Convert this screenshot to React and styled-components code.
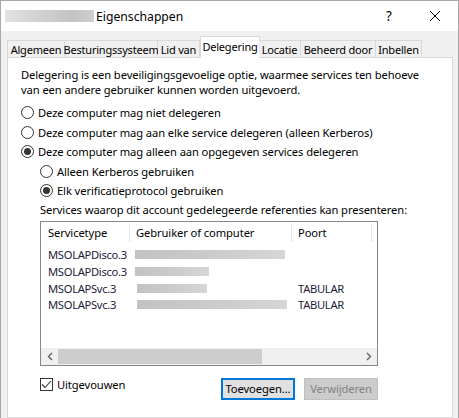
import React from "react";
import styled, { createGlobalStyle } from "styled-components";

const GlobalStyle = createGlobalStyle`
  html, body {
    margin: 0;
    padding: 0;
    background: #ffffff;
  }
  * {
    box-sizing: border-box;
  }
`;

const Window = styled.div`
  width: 459px;
  height: 418px;
  border: 1px solid #a8a8a8;
  border-bottom: none;
  background: #f0f0f0;
  display: flex;
  flex-direction: column;
  font: 11.2px "Noto Sans", "Open Sans", sans-serif;
  color: #000;
  overflow: hidden;
`;

const TitleBar = styled.div`
  height: 30px;
  background: #ffffff;
  display: flex;
  align-items: center;
  padding-left: 4px;
  flex-shrink: 0;
`;

const BlurredName = styled.div`
  width: 89px;
  height: 12px;
  margin-right: 2px;
  background: linear-gradient(90deg, #e2e2e2 0%, #d0d0d0 40%, #c4c4c4 75%, #cfcfcf 100%);
  filter: blur(0.6px);
`;

const TitleText = styled.span`
  font-size: 12.2px;
  flex: 1;
`;

const TitleButton = styled.div`
  width: ${(p) => p.$w}px;
  height: 30px;
  display: flex;
  align-items: center;
  justify-content: center;
  font-size: 13.5px;
`;

const Body = styled.div`
  flex: 1;
  display: flex;
  flex-direction: column;
  padding: 0 5px 0 6px;
`;

const TabStrip = styled.div`
  height: 27px;
  display: flex;
  align-items: flex-end;
  position: relative;
  z-index: 1;
  margin-bottom: -1px;
`;

const Tab = styled.div`
  width: ${(p) => p.$w}px;
  height: ${(p) => (p.$active ? 22 : 18)}px;
  border: 1px solid #d9d9d9;
  border-left: ${(p) => (p.$first || p.$active ? "1px solid #d9d9d9" : "none")};
  border-bottom: ${(p) => (p.$active ? "1px solid #ffffff" : "1px solid #d9d9d9")};
  background: ${(p) => (p.$active ? "#ffffff" : "#f0f0f0")};
  margin-right: ${(p) => (p.$active ? -1 : 0)}px;
  display: flex;
  align-items: ${(p) => (p.$active ? "flex-start" : "center")};
  padding-top: ${(p) => (p.$active ? 2 : 0)}px;
  justify-content: center;
  font-size: 11px;
  white-space: nowrap;
  letter-spacing: -0.2px;
`;

const Panel = styled.div`
  flex: 1;
  background: #ffffff;
  border: 1px solid #d9d9d9;
  padding: 9px 0 0 13px;
  display: flex;
  flex-direction: column;
  letter-spacing: -0.1px;
`;

const Intro = styled.p`
  margin: 0 0 6px 0;
  line-height: 15px;
`;

const OptionRow = styled.div`
  height: 19.5px;
  display: flex;
  align-items: center;
  padding-left: ${(p) => (p.$indent ? 19 : 0)}px;
`;

const RadioCircle = styled.span`
  width: 13px;
  height: 13px;
  border-radius: 50%;
  border: 1px solid #333333;
  margin-right: 4px;
  display: flex;
  align-items: center;
  justify-content: center;
  flex-shrink: 0;
  &::after {
    content: "";
    width: 7px;
    height: 7px;
    border-radius: 50%;
    background: ${(p) => (p.$checked ? "#333333" : "transparent")};
  }
`;

const Section = styled.div`
  padding-left: 19px;
  margin-top: 1px;
  display: flex;
  flex-direction: column;
`;

const ListLabel = styled.div`
  height: 15px;
  line-height: 15px;
  margin-bottom: 4px;
`;

const ListBox = styled.div`
  width: 338px;
  height: 145px;
  border: 1px solid #828790;
  display: flex;
  flex-direction: column;
`;

const HeaderRow = styled.div`
  height: 24px;
  display: flex;
  align-items: stretch;
`;

const HeaderCell = styled.div`
  width: ${(p) => p.$w}px;
  border-right: 1px solid #e5e5e5;
  margin: 1px 0 4px 0;
  padding-left: ${(p) => p.$pad}px;
  display: flex;
  align-items: center;
`;

const Rows = styled.div`
  flex: 1;
  padding-top: 1px;
`;

const DataRow = styled.div`
  height: 16.7px;
  display: flex;
  align-items: center;
`;

const Cell = styled.div`
  width: ${(p) => p.$w}px;
  padding-left: ${(p) => p.$pad}px;
  display: flex;
  align-items: center;
  color: #1b1b3a;
  letter-spacing: -0.3px;
  white-space: nowrap;
`;

const Smudge = styled.div`
  width: ${(p) => p.$w}px;
  height: 9px;
  margin-left: ${(p) => p.$off}px;
  background: linear-gradient(90deg, #c2c2c2 0%, #cbcbcb 50%, #d6d6d6 100%);
`;

const HScroll = styled.div`
  height: 17px;
  background: #f0f0f0;
  display: flex;
  align-items: center;
`;

const ScrollArrow = styled.div`
  width: 17px;
  height: 17px;
  display: flex;
  align-items: center;
  justify-content: center;
`;

const ScrollTrack = styled.div`
  flex: 1;
  height: 15px;
  display: flex;
`;

const ScrollThumb = styled.div`
  width: 204px;
  height: 100%;
  background: #cdcdcd;
`;

const BottomRow = styled.div`
  width: 338px;
  margin-top: 11px;
  display: flex;
  align-items: flex-start;
`;

const CheckLabel = styled.div`
  display: flex;
  align-items: center;
  height: 13px;
  margin-top: 1px;
  flex: 1;
`;

const CheckBox = styled.span`
  width: 13px;
  height: 13px;
  border: 1px solid #333333;
  margin-right: 4px;
  display: flex;
  align-items: center;
  justify-content: center;
`;

const Button = styled.div`
  width: 74px;
  height: 22px;
  margin-left: ${(p) => p.$gap || 0}px;
  margin-top: 1px;
  display: flex;
  align-items: center;
  justify-content: center;
  background: ${(p) => (p.$disabled ? "#cccccc" : "#e1e1e1")};
  border: ${(p) => (p.$default ? "2px solid #0078d7" : "1px solid #bfbfbf")};
  color: ${(p) => (p.$disabled ? "#838383" : "#000000")};
`;

const rows = [
  { type: "MSOLAPDisco.3", smudge: 150, off: 5, port: "" },
  { type: "MSOLAPDisco.3", smudge: 74, off: 5, port: "" },
  { type: "MSOLAPSvc.3", smudge: 70, off: 7, port: "TABULAR" },
  { type: "MSOLAPSvc.3", smudge: 150, off: 7, port: "TABULAR" },
];

const tabs = [
  { label: "Algemeen", w: 58 },
  { label: "Besturingssysteem", w: 93 },
  { label: "Lid van", w: 42 },
  { label: "Delegering", w: 60, active: true },
  { label: "Locatie", w: 42 },
  { label: "Beheerd door", w: 75 },
  { label: "Inbellen", w: 46 },
];

export default function App() {
  return (
    <>
      <GlobalStyle />
      <Window>
        <TitleBar>
          <BlurredName />
          <TitleText>Eigenschappen</TitleText>
          <TitleButton $w={46}>?</TitleButton>
          <TitleButton $w={46}>
            <svg width="12" height="12" viewBox="0 0 12 12">
              <path d="M1 1 L11 11 M11 1 L1 11" stroke="#000" strokeWidth="1" />
            </svg>
          </TitleButton>
        </TitleBar>
        <Body>
          <TabStrip>
            {tabs.map((t, i) => (
              <Tab key={t.label} $w={t.w} $active={t.active} $first={i === 0}>
                {t.label}
              </Tab>
            ))}
          </TabStrip>
          <Panel>
            <Intro>
              Delegering is een beveiligingsgevoelige optie, waarmee services ten behoeve
              <br />
              van een andere gebruiker kunnen worden uitgevoerd.
            </Intro>
            <OptionRow>
              <RadioCircle />
              Deze computer mag niet delegeren
            </OptionRow>
            <OptionRow>
              <RadioCircle />
              Deze computer mag aan elke service delegeren (alleen Kerberos)
            </OptionRow>
            <OptionRow>
              <RadioCircle $checked />
              Deze computer mag alleen aan opgegeven services delegeren
            </OptionRow>
            <OptionRow $indent>
              <RadioCircle />
              Alleen Kerberos gebruiken
            </OptionRow>
            <OptionRow $indent>
              <RadioCircle $checked />
              Elk verificatieprotocol gebruiken
            </OptionRow>
            <Section>
              <ListLabel>Services waarop dit account gedelegeerde referenties kan presenteren:</ListLabel>
              <ListBox>
                <HeaderRow>
                  <HeaderCell $w={89} $pad={7}>Servicetype</HeaderCell>
                  <HeaderCell $w={162} $pad={6}>Gebruiker of computer</HeaderCell>
                  <HeaderCell $w={80} $pad={6}>Poort</HeaderCell>
                </HeaderRow>
                <Rows>
                  {rows.map((r, i) => (
                    <DataRow key={i}>
                      <Cell $w={89} $pad={7}>{r.type}</Cell>
                      <Cell $w={162} $pad={0}>
                        <Smudge $w={r.smudge} $off={r.off} />
                      </Cell>
                      <Cell $w={80} $pad={6}>{r.port}</Cell>
                    </DataRow>
                  ))}
                </Rows>
                <HScroll>
                  <ScrollArrow>
                    <svg width="6" height="9" viewBox="0 0 6 9">
                      <path d="M5 1 L1.5 4.5 L5 8" stroke="#606060" strokeWidth="1.4" fill="none" />
                    </svg>
                  </ScrollArrow>
                  <ScrollTrack>
                    <ScrollThumb />
                  </ScrollTrack>
                  <ScrollArrow>
                    <svg width="6" height="9" viewBox="0 0 6 9">
                      <path d="M1 1 L4.5 4.5 L1 8" stroke="#606060" strokeWidth="1.4" fill="none" />
                    </svg>
                  </ScrollArrow>
                </HScroll>
              </ListBox>
              <BottomRow>
                <CheckLabel>
                  <CheckBox>
                    <svg width="11" height="9" viewBox="0 0 11 9">
                      <path d="M1 4.5 L4 7.5 L10 1" stroke="#333" strokeWidth="1.1" fill="none" />
                    </svg>
                  </CheckBox>
                  Uitgevouwen
                </CheckLabel>
                <Button $default>Toevoegen...</Button>
                <Button $disabled $gap={9}>Verwijderen</Button>
              </BottomRow>
            </Section>
          </Panel>
        </Body>
      </Window>
    </>
  );
}
